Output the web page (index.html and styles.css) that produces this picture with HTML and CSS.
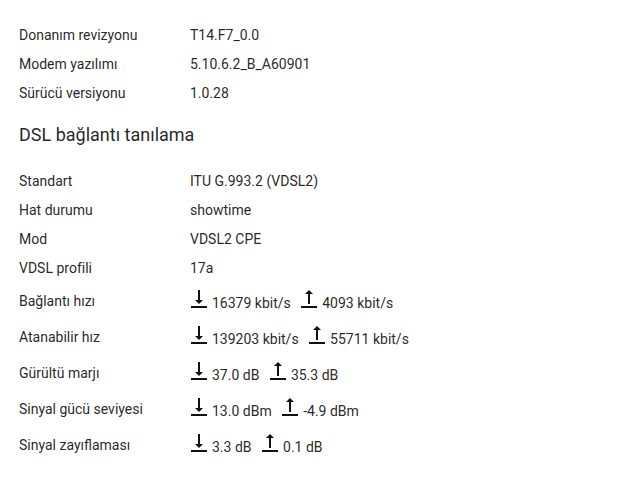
FILE: index.html
```html
<!DOCTYPE html>
<html lang="tr">
<head>
    <meta charset="UTF-8">
    <meta name="viewport" content="width=device-width, initial-scale=1.0">
    <title>DSL</title>
    <link rel="stylesheet" href="styles.css">
</head>
<body>
    <div class="page">
        <!-- Device info -->
        <div class="info-list">
            <div class="row"><div class="label">Donanım revizyonu</div><div class="value">T14.F7_0.0</div></div>
            <div class="row"><div class="label">Modem yazılımı</div><div class="value">5.10.6.2_B_A60901</div></div>
            <div class="row"><div class="label">Sürücü versiyonu</div><div class="value">1.0.28</div></div>
        </div>

        <h2>DSL bağlantı tanılama</h2>

        <div class="info-list">
            <div class="row"><div class="label">Standart</div><div class="value">ITU G.993.2 (VDSL2)</div></div>
            <div class="row"><div class="label">Hat durumu</div><div class="value">showtime</div></div>
            <div class="row"><div class="label">Mod</div><div class="value">VDSL2 CPE</div></div>
            <div class="row"><div class="label">VDSL profili</div><div class="value">17a</div></div>

            <div class="row dual">
                <div class="label">Bağlantı hızı</div>
                <div class="value">
                    <svg class="dl" viewBox="4 3 16 18"><path d="M16 13h-3V3h-2v10H8l4 4 4-4zM4 19v2h16v-2H4z"/></svg><span class="num">16379 kbit/s</span>
                    <svg class="ul" viewBox="4 3 16 18"><path d="M8 7h3v10h2V7h3l-4-4-4 4zM4 19v2h16v-2H4z"/></svg><span class="num">4093 kbit/s</span>
                </div>
            </div>
            <div class="row dual">
                <div class="label">Atanabilir hız</div>
                <div class="value">
                    <svg class="dl" viewBox="4 3 16 18"><path d="M16 13h-3V3h-2v10H8l4 4 4-4zM4 19v2h16v-2H4z"/></svg><span class="num">139203 kbit/s</span>
                    <svg class="ul" viewBox="4 3 16 18"><path d="M8 7h3v10h2V7h3l-4-4-4 4zM4 19v2h16v-2H4z"/></svg><span class="num">55711 kbit/s</span>
                </div>
            </div>
            <div class="row dual">
                <div class="label">Gürültü marjı</div>
                <div class="value">
                    <svg class="dl" viewBox="4 3 16 18"><path d="M16 13h-3V3h-2v10H8l4 4 4-4zM4 19v2h16v-2H4z"/></svg><span class="num">37.0 dB</span>
                    <svg class="ul" viewBox="4 3 16 18"><path d="M8 7h3v10h2V7h3l-4-4-4 4zM4 19v2h16v-2H4z"/></svg><span class="num">35.3 dB</span>
                </div>
            </div>
            <div class="row dual">
                <div class="label">Sinyal gücü seviyesi</div>
                <div class="value">
                    <svg class="dl" viewBox="4 3 16 18"><path d="M16 13h-3V3h-2v10H8l4 4 4-4zM4 19v2h16v-2H4z"/></svg><span class="num">13.0 dBm</span>
                    <svg class="ul" viewBox="4 3 16 18"><path d="M8 7h3v10h2V7h3l-4-4-4 4zM4 19v2h16v-2H4z"/></svg><span class="num">-4.9 dBm</span>
                </div>
            </div>
            <div class="row dual">
                <div class="label">Sinyal zayıflaması</div>
                <div class="value">
                    <svg class="dl" viewBox="4 3 16 18"><path d="M16 13h-3V3h-2v10H8l4 4 4-4zM4 19v2h16v-2H4z"/></svg><span class="num">3.3 dB</span>
                    <svg class="ul" viewBox="4 3 16 18"><path d="M8 7h3v10h2V7h3l-4-4-4 4zM4 19v2h16v-2H4z"/></svg><span class="num">0.1 dB</span>
                </div>
            </div>
        </div>

        <h2 class="next">Hat performans profili</h2>
    </div>
</body>
</html>
```

FILE: styles.css
```css
body {
    font-family: Roboto, "Liberation Sans", sans-serif;
    color: rgba(0, 0, 0, 0.87);
    background-color: #fff;
    margin: 0;
    padding: 0;
}
.page {
    padding: 21px 19px 0;
}
.row {
    display: flex;
    align-items: flex-start;
    font-size: 14px;
    line-height: 29px;
}
.label {
    width: 171px;
    flex-shrink: 0;
}
.row.dual {
    min-height: 36px;
}
.row.dual .label {
    padding-top: 4px;
}
.row.dual .value {
    padding-top: 6px;
    padding-left: 1px;
    white-space: nowrap;
}
.value svg {
    width: 16px;
    height: 18px;
    fill: #111;
}
.value .num {
    margin-left: 5px;
}
.value .ul {
    margin-left: 7px;
}
h2 {
    font-size: 18px;
    font-weight: 400;
    line-height: 28px;
    margin: 13px 0 17.5px;
}
h2.next {
    margin-top: 15px;
}
```
